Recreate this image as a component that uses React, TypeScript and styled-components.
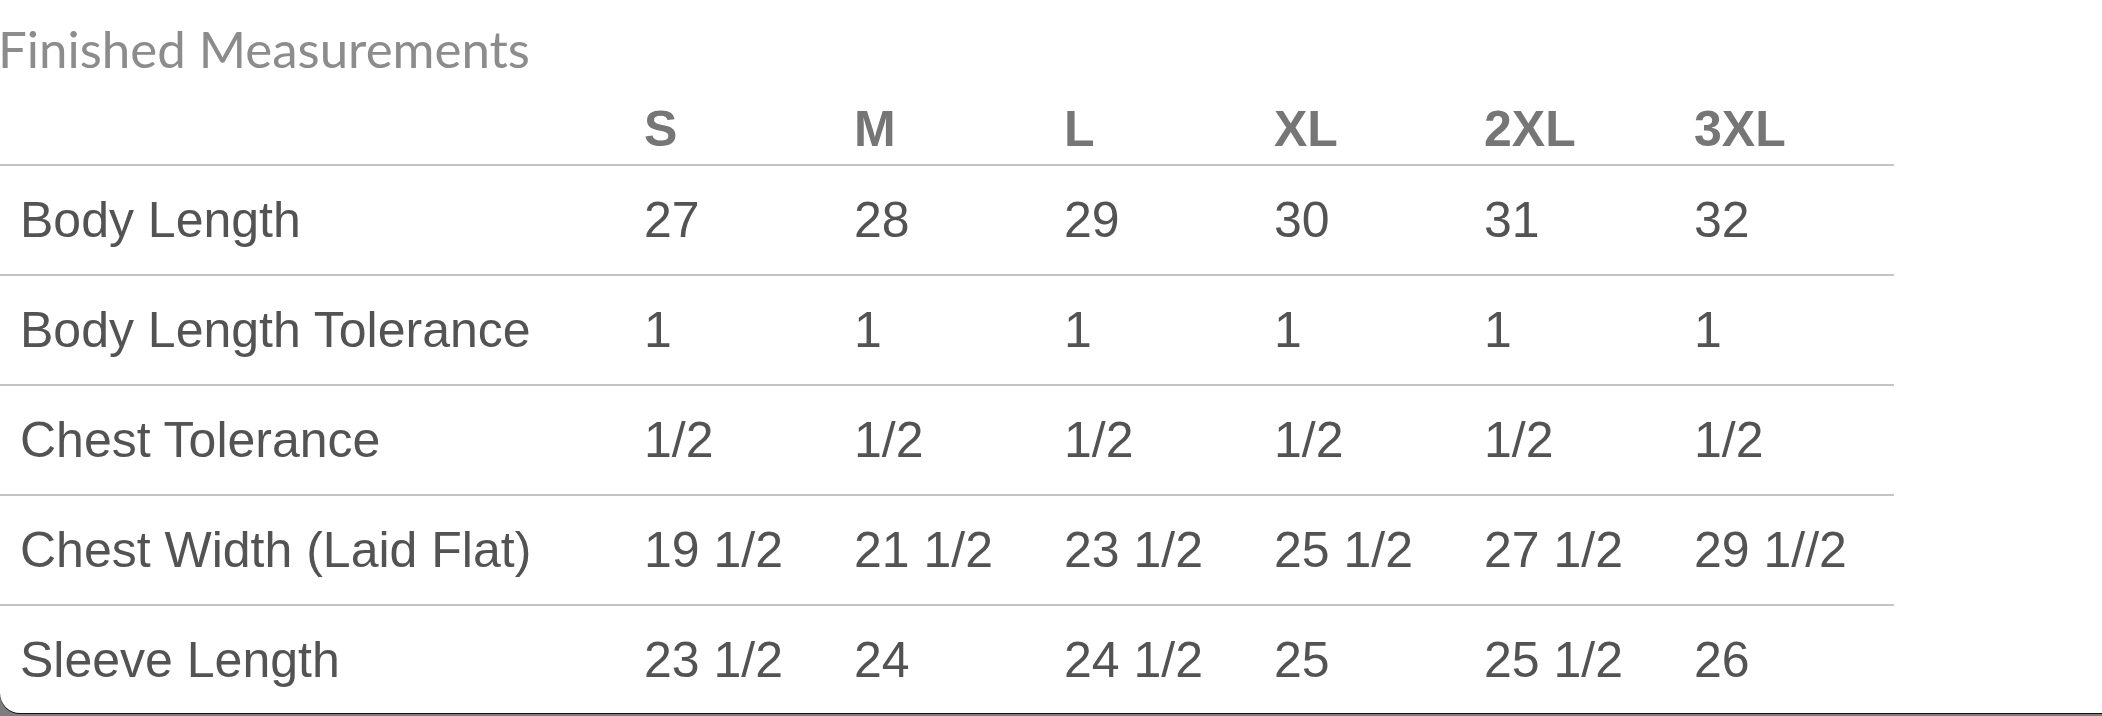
import React from "react";
import styled, { createGlobalStyle } from "styled-components";

const GlobalStyle = createGlobalStyle`
  html, body {
    margin: 0;
    padding: 0;
    background: #1c1c1c;
  }
  #root {
    width: 2102px;
    height: 716px;
    overflow: hidden;
  }
`;

const Frame = styled.div`
  width: 2102px;
  height: 716px;
  background: linear-gradient(180deg, #b4b4b4 0%, #7d7d7d 100%);
  overflow: hidden;
`;

const Card = styled.div`
  width: 2102px;
  height: 713px;
  background: #ffffff;
  border-bottom-left-radius: 20px;
  box-shadow: 0 1px 0 #111111;
  overflow: hidden;
`;

const Title = styled.h2`
  margin: 0;
  padding-top: 19px;
  margin-left: -2px;
  font-family: Lato, "Open Sans", sans-serif;
  font-weight: 400;
  font-size: 51px;
  line-height: 60px;
  color: #8c8c8c;
`;

const Table = styled.table`
  width: 1894px;
  border-collapse: separate;
  border-spacing: 0;
  table-layout: fixed;
  font-family: "Liberation Sans", Arial, sans-serif;
`;

const HeadCell = styled.th`
  padding: 21px 0 6px 20px;
  text-align: left;
  vertical-align: bottom;
  font-size: 50px;
  line-height: 58px;
  font-weight: 700;
  color: #767676;
  border-bottom: 2px solid #c4c4c4;
  white-space: nowrap;
`;

const Cell = styled.td<{ $last?: boolean }>`
  padding: 25px 0 25px 20px;
  text-align: left;
  vertical-align: middle;
  font-size: 50px;
  line-height: 58px;
  font-weight: 400;
  color: #535353;
  border-bottom: ${(p) => (p.$last ? "none" : "2px solid #c4c4c4")};
  white-space: nowrap;
`;

const sizes = ["S", "M", "L", "XL", "2XL", "3XL"];

const rows: { label: string; values: string[] }[] = [
  { label: "Body Length", values: ["27", "28", "29", "30", "31", "32"] },
  { label: "Body Length Tolerance", values: ["1", "1", "1", "1", "1", "1"] },
  { label: "Chest Tolerance", values: ["1/2", "1/2", "1/2", "1/2", "1/2", "1/2"] },
  {
    label: "Chest Width (Laid Flat)",
    values: ["19 1/2", "21 1/2", "23 1/2", "25 1/2", "27 1/2", "29 1//2"],
  },
  { label: "Sleeve Length", values: ["23 1/2", "24", "24 1/2", "25", "25 1/2", "26"] },
];

const colWidths = [624, 210, 210, 210, 210, 210, 220];

export default function App() {
  return (
    <>
      <GlobalStyle />
      <Frame>
        <Card>
          <Title>Finished Measurements</Title>
          <Table>
            <colgroup>
              {colWidths.map((w, i) => (
                <col key={i} style={{ width: w }} />
              ))}
            </colgroup>
            <thead>
              <tr>
                <HeadCell />
                {sizes.map((s) => (
                  <HeadCell key={s}>{s}</HeadCell>
                ))}
              </tr>
            </thead>
            <tbody>
              {rows.map((r, ri) => {
                const last = ri === rows.length - 1;
                return (
                  <tr key={r.label}>
                    <Cell $last={last}>{r.label}</Cell>
                    {r.values.map((v, vi) => (
                      <Cell key={vi} $last={last}>
                        {v}
                      </Cell>
                    ))}
                  </tr>
                );
              })}
            </tbody>
          </Table>
        </Card>
      </Frame>
    </>
  );
}
